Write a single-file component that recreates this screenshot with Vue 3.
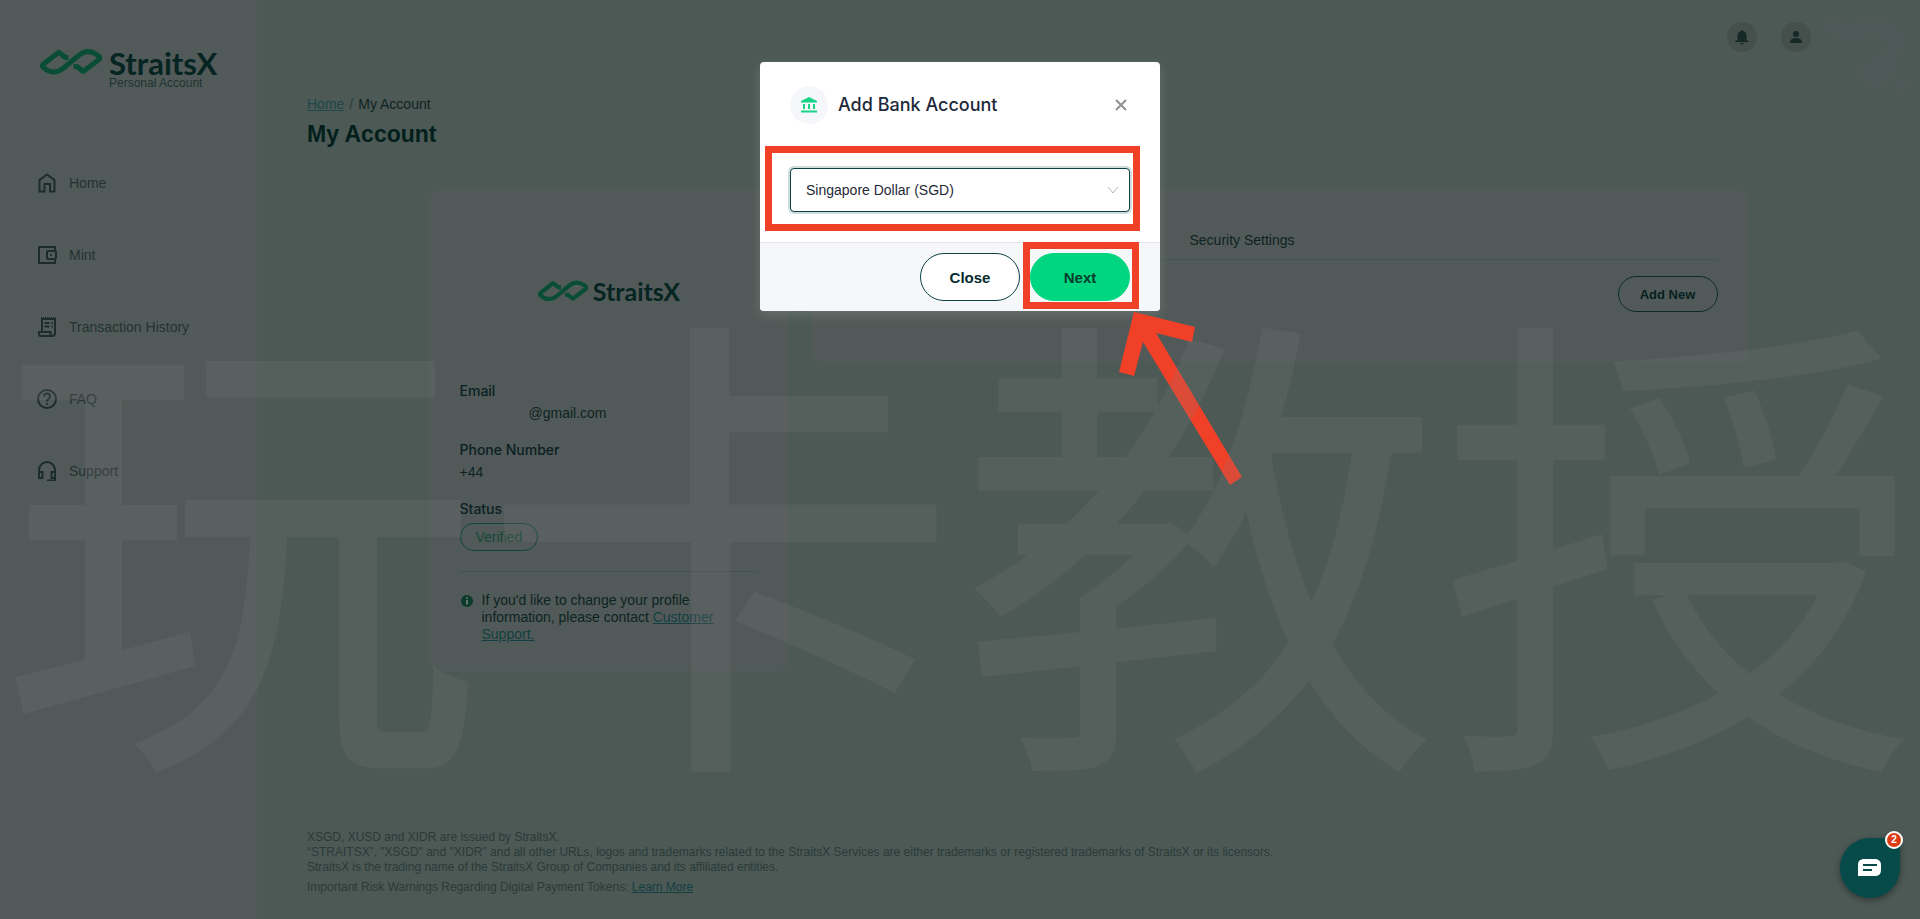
<script setup>
import { ref } from 'vue'

const currency = ref('SGD')
const navItems = [
  { label: 'Home', icon: 'home' },
  { label: 'Mint', icon: 'wallet' },
  { label: 'Transaction History', icon: 'receipt' },
  { label: 'FAQ', icon: 'help' },
  { label: 'Support', icon: 'headset' },
]
</script>

<template>
  <div class="app">
    <aside class="sidebar">
      <div class="brand">
        <svg class="mark" viewBox="0 0 64 26" aria-hidden="true">
          <path d="M29.500 8.500 L26.500 8.500 L19.800 3.200 L4 15.500 Q2.500 17 4.500 18.500 Q14 27 24 19.500 L39 7 Q48 -1 57.500 5.500 L60 7.500 Q61.500 9 60 10.500 L44.200 22.500 L38 17.500 L34.500 17.500" />
        </svg>
        <div class="brand-text">
          <span class="wordmark">StraitsX</span>
          <span class="brand-sub">Personal Account</span>
        </div>
      </div>
      <nav class="nav">
        <a v-for="item in navItems" :key="item.label" href="#" class="nav-link">
          <svg class="nav-icon" viewBox="0 0 20 20" aria-hidden="true">
            <path v-if="item.icon === 'home'" d="M2.500 18.500V7L10 1.500L17.500 7V18.500H13V11H7.500V18.500Z" />
            <g v-else-if="item.icon === 'wallet'">
              <path d="M18 5V2H2V18H18V15" />
              <rect x="10" y="6" width="9" height="8" rx="1" />
              <circle cx="14" cy="10" r="1" class="solid" />
            </g>
            <g v-else-if="item.icon === 'receipt'">
              <path d="M5 14V2H18V16Q18 19 15.500 19H3.500Q2 19 2 17V15H13.500V17Q13.500 19 15.500 19" />
              <path d="M7.500 6H12.500M7.500 9.500H12.500M14.500 6H16M14.500 9.500H16" />
              <path d="M4 1H19" stroke-dasharray="1 1" />
            </g>
            <g v-else-if="item.icon === 'help'">
              <circle cx="10" cy="10" r="9" />
              <path d="M7 7.500Q7 4.500 10 4.500T13 7.500Q13 8.800 11.500 10T10 12.500" />
              <circle cx="10" cy="15" r="1" class="solid" />
            </g>
            <g v-else>
              <path d="M2 16V9A8 8 0 0 1 18 9V19.500H10" />
              <path d="M2 11H5.500V17H2ZM18 11H14.500V17H18Z" />
            </g>
          </svg>
          <span>{{ item.label }}</span>
        </a>
      </nav>
    </aside>

    <main class="main">
      <div class="tools">
        <button class="tool" aria-label="Notifications">
          <svg viewBox="0 0 16 16"><path d="M8 1q1 0 1 1q3.500 1 3.500 5v3.500q0 1 2.500 1.500v1H1v-1q2.500-.5 2.500-1.500V7q0-4 3.500-5q0-1 1-1ZM6 14h4q-.5 1.500-2 1.500T6 14Z" /></svg>
        </button>
        <button class="tool" aria-label="Profile">
          <svg viewBox="0 0 16 16"><circle cx="8" cy="5" r="3" /><path d="M2 14q0-5 6-5t6 5Z" /></svg>
        </button>
      </div>
      <svg class="smudge" viewBox="0 0 96 84" aria-hidden="true">
        <path d="M13 12L32 19Q58 8 72 19T64 50L48 60L62 60" class="thick" />
        <path d="M72 56L60 70M84 72L84 72" class="thin" />
      </svg>

      <header class="page-head">
        <div class="crumbs"><a href="#">Home</a><span class="sep">/</span><span>My Account</span></div>
        <h1>My Account</h1>
      </header>

      <div class="cards">
        <section class="card profile">
          <div class="card-logo">
            <svg class="mark" viewBox="0 0 64 26" aria-hidden="true">
              <path d="M29.500 8.500 L26.500 8.500 L19.800 3.200 L4 15.500 Q2.500 17 4.500 18.500 Q14 27 24 19.500 L39 7 Q48 -1 57.500 5.500 L60 7.500 Q61.500 9 60 10.500 L44.200 22.500 L38 17.500 L34.500 17.500" />
            </svg>
            <span class="wordmark">StraitsX</span>
          </div>
          <dl class="fields">
            <div><dt>Email</dt><dd class="masked">@gmail.com</dd></div>
            <div><dt>Phone Number</dt><dd>+44</dd></div>
            <div><dt>Status</dt><dd><span class="pill">Verified</span></dd></div>
          </dl>
          <div class="note">
            <svg viewBox="0 0 12 12" aria-hidden="true"><circle cx="6" cy="6" r="6" /><path d="M5 2.500h2v1.500H5ZM5 5h2v4.500H5Z" /></svg>
            <p>If you'd like to change your profile information, please contact <a href="#">Customer Support.</a></p>
          </div>
        </section>
        <section class="card accounts">
          <div class="tabs"><a href="#">Security Settings</a></div>
          <button class="add-new">Add New</button>
        </section>
      </div>

      <footer class="legal">
        <p>XSGD, XUSD and XIDR are issued by StraitsX.</p>
        <p>“STRAITSX”, "XSGD" and "XIDR" and all other URLs, logos and trademarks related to the StraitsX Services are either trademarks or registered trademarks of StraitsX or its licensors.</p>
        <p>StraitsX is the trading name of the StraitsX Group of Companies and its affiliated entities.</p>
        <p class="risk">Important Risk Warnings Regarding Digital Payment Tokens: <a href="#">Learn More</a></p>
      </footer>
    </main>

    <div class="modal" role="dialog" aria-labelledby="modal-title">
      <div class="modal-head">
        <span class="bank">
          <svg viewBox="0 0 16 16" aria-hidden="true"><path d="M8 0L16 4V5.500H0V4ZM2 7H4V12H2ZM7 7H9V12H7ZM12 7H14V12H12ZM0 13.500H16V15.500H0Z" /></svg>
        </span>
        <h2 id="modal-title">Add Bank Account</h2>
        <button class="dismiss" aria-label="Dismiss"><svg viewBox="0 0 12 12"><path d="M1 1L11 11M11 1L1 11" /></svg></button>
      </div>
      <div class="modal-body">
        <select v-model="currency" aria-label="Currency">
          <option value="SGD">Singapore Dollar (SGD)</option>
        </select>
        <svg class="chevron" viewBox="0 0 12 8" aria-hidden="true"><path d="M1 1L6 7L11 1" /></svg>
      </div>
      <div class="modal-foot">
        <button class="btn">Close</button>
        <button class="btn primary">Next</button>
      </div>
      <span class="frame frame-select"></span>
      <span class="frame frame-next"></span>
      <svg class="arrow" viewBox="0 0 124 174" aria-hidden="true">
        <path d="M15 0L76 15L73 30L37 21L123 165L111 173L24 30L15 64L0 60Z" />
      </svg>
    </div>

    <div class="watermark" aria-hidden="true">玩卡教授</div>

    <button class="chat" aria-label="Open chat">
      <svg viewBox="0 0 24 18" aria-hidden="true"><path class="bubble" d="M5 0H18Q23 1 23 6V11Q23 17 17 17H0V5Q0 1 5 0Z" /><path class="lines" d="M5 6H19M5 11H14" /></svg>
      <span class="badge">2</span>
    </button>
  </div>
</template>

<style>
body { margin: 0; background: #4c5955; }
</style>

<style scoped>
* { box-sizing: border-box; }
.app {
  position: relative;
  display: flex;
  min-height: 100vh;
  overflow: hidden;
  background: #4c5955;
  color: #0d2322;
  font: 14px/17px "Liberation Sans", Arial, sans-serif;
}
button, select { font: inherit; }
h1, h2, p, dl, dd { margin: 0; }
a { color: #133f43; }
svg { display: block; }
.sidebar { flex: 0 0 257px; padding: 49px 30px 0 37px; background: #515a58; }
.brand { display: flex; gap: 6px; margin-left: 2px; }
.mark { width: 64px; height: 26px; overflow: visible; }
.mark path { fill: none; stroke: #094d34; stroke-width: 5; stroke-linejoin: round; }
.wordmark { color: #052422; font: bold 31px/28px Lato, sans-serif; }
.brand-text { display: flex; flex-direction: column; }
.brand-sub { color: #1e3432; font-size: 12px; line-height: 12px; }
.nav { display: flex; flex-direction: column; gap: 52px; margin-top: 84px; }
.nav-link { display: flex; align-items: center; gap: 12px; height: 20px; color: #233331; text-decoration: none; }
.nav-icon { width: 20px; height: 20px; fill: none; stroke: #1b2c2a; stroke-width: 2; }
.nav-icon .solid { fill: #1b2c2a; stroke: none; }
.main { position: relative; flex: 1; min-width: 0; display: flex; flex-direction: column; padding: 22px 50px 24px; }
.tools { display: flex; justify-content: flex-end; gap: 24px; margin-right: 59px; }
.tool { width: 30px; height: 30px; padding: 7px; border: 0; border-radius: 50%; background: #45504d; }
.tool svg { width: 16px; height: 16px; fill: #172927; }
.smudge { position: absolute; top: 14px; right: 6px; width: 96px; height: 84px; fill: none; stroke: #4f5957; stroke-linecap: round; stroke-linejoin: round; }
.thick { stroke-width: 18; }
.thin { stroke-width: 14; }
.page-head { margin-top: 44px; }
.crumbs { display: flex; gap: 5px; }
.crumbs a { color: #1d474a; }
.sep { color: #26403f; }
h1 { margin-top: 7px; color: #031f1c; font-size: 23px; line-height: 29px; }
.cards { display: flex; align-items: flex-start; gap: 24px; width: 100%; max-width: 1318px; margin: 41px auto 0; }
.card { padding: 30px; border-radius: 8px; background: #515a58; }
.profile { flex: 0 0 358px; padding-bottom: 28px; }
.card-logo { display: flex; justify-content: center; align-items: center; gap: 4px; height: 141px; }
.card-logo .mark { width: 52px; height: 22px; }
.card-logo .wordmark { font-size: 25px; }
.fields { display: flex; flex-direction: column; gap: 19px; margin-top: 21px; padding-bottom: 20px; border-bottom: 1px solid #475250; }
dt { color: #0b2024; font-family: Inter, sans-serif; font-weight: 500; line-height: 18px; }
dd { margin-top: 5px; line-height: 17px; }
.masked { padding-left: 69px; }
.pill { display: inline-block; height: 28px; padding: 0 15px; border: 1px solid #0f4636; border-radius: 14px; color: #174838; line-height: 26px; }
.note { display: flex; gap: 9px; margin-top: 20px; }
.note svg { flex: none; width: 12px; height: 12px; margin: 3px 0 0 1px; fill: #0c3a2b; }
.note svg path { fill: #647570; }
.accounts { flex: 1; min-height: 172px; }
.tabs { height: 40px; padding: 12px 0 0 348px; border-bottom: 1px solid #495451; }
.tabs a { color: #0f2221; text-decoration: none; }
.add-new { display: block; width: 100px; height: 36px; margin: 16px 0 0 auto; border: 1px solid #0b2e2b; border-radius: 18px; background: none; color: #06211f; font-size: 13px; font-weight: bold; }
.legal { margin-top: auto; color: #2a3b38; font-size: 12px; line-height: 15px; }
.legal .risk { margin-top: 5px; }
.modal { position: absolute; top: 62px; left: calc(50% - 200px); width: 400px; border-radius: 4px; background: #fff; box-shadow: 0 4px 12px rgba(255, 255, 255, 0.14); }
.modal-head { display: flex; align-items: center; height: 86px; padding: 0 30px; }
.bank { display: grid; place-items: center; width: 38px; height: 38px; border-radius: 50%; background: #f5f7fa; }
.bank svg { width: 16px; height: 16px; fill: #17d486; }
h2 { flex: 1; margin-left: 10px; color: #1e293b; font-family: Inter, sans-serif; font-size: 18px; font-weight: 500; line-height: 24px; }
.dismiss { padding: 3px; border: 0; background: none; }
.dismiss svg { width: 12px; height: 12px; fill: none; stroke: #919191; stroke-width: 2; }
.modal-body { position: relative; padding: 20px 30px 30px; }
select { display: block; width: 100%; height: 44px; padding: 0 15px; border: 1px solid #0d4243; border-radius: 4px; outline: 0; background: #fff; color: #1f2937; box-shadow: 0 0 0 2px #cfdddd; appearance: none; }
.chevron { position: absolute; top: 38px; right: 41px; width: 12px; height: 8px; fill: none; stroke: #b5b5b5; pointer-events: none; }
.modal-foot { display: flex; justify-content: flex-end; gap: 10px; padding: 10px 30px; border-top: 1px solid #e5e7e9; border-radius: 0 0 4px 4px; background: #f5f7fa; }
.btn { width: 100px; height: 48px; border: 1px solid #0d4243; border-radius: 24px; background: #fff; color: #042c2d; font-size: 15px; font-weight: bold; }
.primary { border-color: #00d67f; background: #00d67f; color: #043c2e; }
.frame { position: absolute; border: 7px solid #f04028; pointer-events: none; }
.frame-select { top: 84px; left: 5px; width: 375px; height: 85px; }
.frame-next { top: 180px; left: 263px; width: 116px; height: 67px; }
.arrow { position: absolute; top: 250px; left: 359px; width: 124px; height: 174px; fill: #f04028; pointer-events: none; }
.watermark { position: absolute; top: 283px; left: 0; opacity: 0.18; color: #828080; font: 25vw/1 "Noto Sans CJK SC", sans-serif; -webkit-text-stroke: 2px #828080; white-space: nowrap; pointer-events: none; }
.chat { position: absolute; right: 20px; bottom: 21px; display: grid; place-items: center; width: 60px; height: 60px; padding: 0; border: 0; border-radius: 30px 4px 30px 30px; background: #064b4a; box-shadow: 0 2px 6px rgba(0, 0, 0, 0.4); }
.chat svg { width: 24px; height: 18px; }
.bubble { fill: #fff; }
.lines { fill: none; stroke: #064b4a; stroke-width: 2; }
.badge { position: absolute; top: -7px; right: -3px; width: 18px; height: 18px; border: 2px solid #fff; border-radius: 50%; background: #dc3c14; color: #fff; font-size: 10px; font-weight: bold; line-height: 14px; text-align: center; }
</style>
